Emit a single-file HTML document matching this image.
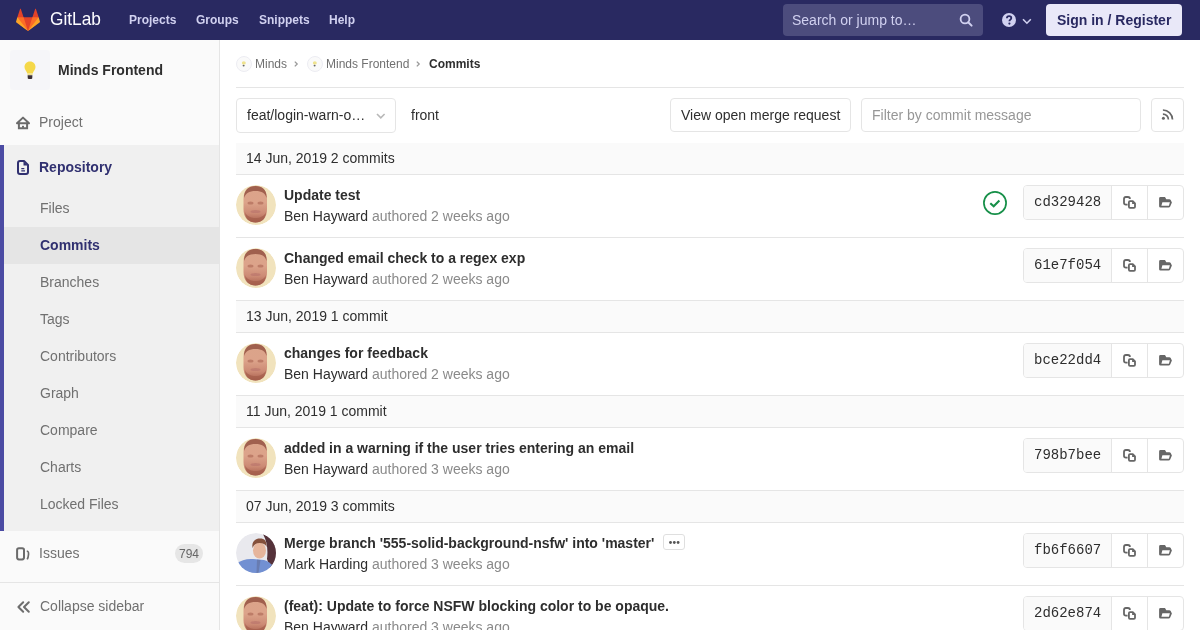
<!DOCTYPE html>
<html><head><meta charset="utf-8">
<style>
*{box-sizing:border-box;margin:0;padding:0}
html,body{width:1200px;height:630px;overflow:hidden;background:#fff}
body{font-family:"Liberation Sans",sans-serif;font-size:14px;color:#2e2e2e}
#wrap{position:absolute;left:0;top:0;width:1200px;height:630px;will-change:transform;overflow:hidden}
.abs{position:absolute}
svg{position:absolute;overflow:visible}
/* header */
#hdr{position:absolute;left:0;top:0;width:1200px;height:40px;background:#292961}
#hdr .nav{position:absolute;top:13px;font-weight:bold;font-size:12px;color:#d1d1f0;line-height:14px}
#search{position:absolute;left:783px;top:4px;width:200px;height:32px;border-radius:4px;background:#4c4c7d}
#search span{position:absolute;left:9px;top:8px;line-height:16px;color:#d1d1f0;font-size:14px}
#signin{position:absolute;left:1046px;top:4px;width:136px;height:32px;border-radius:4px;background:#e9e8f8;color:#292961;font-weight:bold;font-size:14px;line-height:16px;padding:8px 0 0 11px}
/* sidebar */
#side{position:absolute;left:0;top:40px;width:220px;height:590px;background:#fafafa;border-right:1px solid #e5e5e5}
#side .t{position:absolute;line-height:16px;font-size:14px;white-space:nowrap}
#repo{position:absolute;left:0;top:105px;width:219px;height:386px;background:#f0f0f0;border-left:4px solid #4b4ba3}
#side .sub{position:absolute;left:40px;color:#707070}
/* content */
.crumb{position:absolute;top:57px;font-size:12px;line-height:14px;color:#707070;white-space:nowrap}
.box{position:absolute;border:1px solid #e5e5e5;border-radius:4px;background:#fff}
.dh{position:absolute;left:236px;width:948px;background:#fafafa;border-bottom:1px solid #e5e5e5}
.dh span{position:absolute;left:10px;line-height:16px}
.row{position:absolute;left:236px;width:948px;height:63px;border-bottom:1px solid #e5e5e5}
.row .av{position:absolute;left:0;top:10px;width:40px;height:40px}
.row .ti{position:absolute;left:48px;top:12px;font-weight:bold;line-height:16px;white-space:nowrap}
.row .au{position:absolute;left:48px;top:33px;line-height:16px;white-space:nowrap}
.row .au i{font-style:normal;color:#8a8a8a}
.sha{position:absolute;left:787px;top:10px;width:161px;height:35px;border:1px solid #e5e5e5;border-radius:4px;background:#fff}
.sha .h{position:absolute;left:0;top:0;width:88px;height:33px;background:#fafafa;border-right:1px solid #e5e5e5;border-radius:3px 0 0 3px;font-family:"Liberation Mono",monospace;font-size:14px;line-height:16px;padding:8px 0 0 10px;color:#2e2e2e}
.sha .c{position:absolute;left:88px;top:0;width:36px;height:33px;border-right:1px solid #e5e5e5}
.sha .c2{position:absolute;left:124px;top:0;width:36px;height:32px}
</style></head><body><div id="wrap">

<svg width="0" height="0" style="position:absolute">
 <defs>
  <clipPath id="avclip"><circle cx="20" cy="20" r="20"/></clipPath>
  <radialGradient id="bgBen" cx="50%" cy="50%" r="50%"><stop offset="0" stop-color="#f3e6c4"/><stop offset="1" stop-color="#efdcb4"/></radialGradient>
  <linearGradient id="faceBen" x1="0" y1="0" x2="0" y2="1"><stop offset="0" stop-color="#dba48a"/><stop offset="0.45" stop-color="#dca38a"/><stop offset="0.75" stop-color="#cc8a74"/><stop offset="1" stop-color="#a85e4c"/></linearGradient>
  <symbol id="ben" viewBox="0 0 40 40"><g clip-path="url(#avclip)">
   <circle cx="20" cy="20" r="20" fill="#f1e3bd"/>
   <path d="M7.5 14 C7.5 5 12.5 1 19.5 1 C26.5 1 31 5 31 14 L31 24 C31 33 26 37.5 19.5 37.5 C13 37.5 7.5 33 7.5 24 Z" fill="url(#faceBen)"/>
   <path d="M8 13 C8 5 12.5 1 19.5 1 C26.5 1 31 5 30.5 13 C29.5 8.5 26 6 19.5 6 C13 6 9.5 8.5 8 13Z" fill="#a0604e"/>
   <ellipse cx="14.5" cy="18" rx="3" ry="1.6" fill="#b06c5a" opacity=".7"/>
   <ellipse cx="24.5" cy="18" rx="3" ry="1.6" fill="#b06c5a" opacity=".7"/>
   <ellipse cx="19.5" cy="26.5" rx="5" ry="1.6" fill="#b8716a" opacity=".6"/>
   <path d="M9 27 C12 35 27 35 30 27 C29.5 34 25.5 37.5 19.5 37.5 C13.5 37.5 9.5 34 9 27Z" fill="#a35c4a" opacity=".7"/>
  </g></symbol>
  <symbol id="mark" viewBox="0 0 40 40"><g clip-path="url(#avclip)">
   <circle cx="20" cy="20" r="20" fill="#e9e9ee"/>
   <path d="M27 1 C35 4 41 11 41 21 C41 28 38 32 34 35 L31 26 C32 18 31.5 9 27 1Z" fill="#55323a"/>
   <path d="M0 31 C5 27 11 25.5 17 26 L28 27 C32 28 35 30.5 37 33 L40 40 L0 40Z" fill="#7290d2"/>
   <path d="M21 26.5 L24.5 27 L22.5 40 L20.5 40Z" fill="#5a5f80" opacity=".4"/>
   <ellipse cx="23.5" cy="17.5" rx="6.5" ry="8" fill="#e6b59c"/>
   <path d="M16.5 15 C15.5 8 19.5 5.5 24 5.5 C28.5 5.5 31 8 30.5 14 C29.5 11 27 10 23.5 10 C20 10 18 11.5 16.5 15Z" fill="#84503c"/>
  </g></symbol>
 </defs>
</svg>

<div id="hdr">
  <svg style="left:16px;top:8px" width="24" height="24" viewBox="0 0 36 36">
    <path fill="#e24329" d="M2 14l9.38 9v-9l-4-12.28c-.205-.632-1.176-.632-1.38 0z"/>
    <path fill="#e24329" d="M34 14l-9.38 9v-9l4-12.28c.205-.632 1.176-.632 1.38 0z"/>
    <path fill="#e24329" d="M18,34.38 3,14 33,14 Z"/>
    <path fill="#fc6d26" d="M18,34.38 11.38,14 2,14 6,25Z"/>
    <path fill="#fc6d26" d="M18,34.38 24.62,14 34,14 30,25Z"/>
    <path fill="#fca326" d="M2 14L.1 20.16c-.18.565 0 1.2.5 1.56l17.42 12.66z"/>
    <path fill="#fca326" d="M34 14l1.9 6.16c.18.565 0 1.2-.5 1.56L18 34.38z"/>
  </svg>
  <div class="abs" style="left:50px;top:9px;font-size:19px;line-height:20px;color:#fcfcff;transform:scaleX(0.91);transform-origin:0 0">GitLab</div>
  <div class="nav" style="left:129px">Projects</div>
  <div class="nav" style="left:196px">Groups</div>
  <div class="nav" style="left:259px">Snippets</div>
  <div class="nav" style="left:329px">Help</div>
  <div id="search"><span>Search or jump to…</span>
    <svg style="left:176px;top:10px" width="14" height="14" viewBox="0 0 14 14"><circle cx="6" cy="5" r="4.4" fill="none" stroke="#d1d1f0" stroke-width="1.8"/><path d="M9.2 8.2 L12.6 11.6" stroke="#d1d1f0" stroke-width="2" stroke-linecap="round"/></svg>
  </div>
  <svg style="left:1002px;top:13px" width="14" height="14" viewBox="0 0 14 14"><circle cx="7" cy="7" r="7" fill="#d1d1f0"/><path d="M4.9 5.3 C4.9 3.9 5.9 3.1 7.1 3.1 C8.4 3.1 9.3 3.9 9.3 5 C9.3 6.6 7.4 6.6 7.4 8.2" fill="none" stroke="#292961" stroke-width="1.8"/><circle cx="7.4" cy="10.6" r="1.1" fill="#292961"/></svg>
  <svg style="left:1022px;top:18px" width="10" height="7" viewBox="0 0 10 7"><path d="M1 1.2 L4.9 5.2 L8.8 1.2" fill="none" stroke="#d1d1f0" stroke-width="1.6"/></svg>
  <div id="signin">Sign in / Register</div>
</div>

<div id="side">
  <div class="abs" style="left:10px;top:10px;width:40px;height:40px;border-radius:4px;background:#f6f6f9"></div>
  <svg style="left:24px;top:21px" width="12" height="19" viewBox="0 0 12 19">
    <path d="M6 0.5 C9.5 0.5 11.5 3 11.5 6 C11.5 8.5 9.5 10 8.7 12.5 L3.3 12.5 C2.5 10 0.5 8.5 0.5 6 C0.5 3 2.5 0.5 6 0.5Z" fill="#f5d84a"/>
    <path d="M3.3 12.5 L8.7 12.5 L8.5 14 L3.5 14Z" fill="#f0e08a"/>
    <path d="M3.6 14.2 L8.4 14.2 L8.2 17.5 C7.5 18.3 4.5 18.3 3.8 17.5Z" fill="#3b3034"/>
  </svg>
  <div class="t" style="left:58px;top:22px;font-weight:bold;color:#2e2e2e">Minds Frontend</div>
  <svg style="left:16px;top:76px" width="14" height="14" viewBox="0 0 14 14"><path d="M1 7.3 L7 1.6 L13 7.3 Z" fill="none" stroke="#6b6b6b" stroke-width="2" stroke-linejoin="round"/><path d="M2.9 7.3 V12.2 H11.1 V7.3" fill="none" stroke="#6b6b6b" stroke-width="2"/><rect x="6" y="9.8" width="2" height="2" fill="#6b6b6b"/></svg>
  <div class="t" style="left:39px;top:74px;color:#707070">Project</div>
  <div id="repo"></div>
  <svg style="left:17px;top:120px" width="12" height="15" viewBox="0 0 12 15"><path d="M1 3 Q1 1 3 1 H7 L11 5 V12 Q11 14 9 14 H3 Q1 14 1 12 Z" fill="none" stroke="#303070" stroke-width="2" stroke-linejoin="round"/><path d="M6.5 1.5 V5.5 H10.5Z" fill="#303070"/><path d="M4.3 8.6 H7.3 M4.3 10.8 H8" stroke="#303070" stroke-width="1.3"/></svg>
  <div class="t" style="left:39px;top:119px;font-weight:bold;color:#303070">Repository</div>
  <div class="t sub" style="top:160px">Files</div>
  <div class="abs" style="left:4px;top:187px;width:215px;height:37px;background:#e5e5e5"></div>
  <div class="t sub" style="top:197px;font-weight:bold;color:#303070">Commits</div>
  <div class="t sub" style="top:234px">Branches</div>
  <div class="t sub" style="top:271px">Tags</div>
  <div class="t sub" style="top:308px">Contributors</div>
  <div class="t sub" style="top:345px">Graph</div>
  <div class="t sub" style="top:382px">Compare</div>
  <div class="t sub" style="top:419px">Charts</div>
  <div class="t sub" style="top:456px">Locked Files</div>
  <svg style="left:16px;top:506px" width="14" height="16" viewBox="0 0 14 16"><rect x="1.1" y="2.2" width="6.9" height="11.2" rx="1.8" fill="none" stroke="#6b6b6b" stroke-width="2"/><path d="M10.8 5.2 C12.6 5.4 12.7 6 12.5 8.5 C12.3 10.8 12 12.2 11.2 13.4" fill="none" stroke="#6b6b6b" stroke-width="1.7"/></svg>
  <div class="t" style="left:39px;top:505px;color:#707070">Issues</div>
  <div class="abs" style="left:175px;top:504px;width:28px;height:19px;border-radius:9.5px;background:#e6e6e6;font-size:12px;line-height:20px;text-align:center;color:#666">794</div>
  <div class="abs" style="left:0;top:542px;width:219px;height:1px;background:#e5e5e5"></div>
  <svg style="left:16px;top:560px" width="15" height="15" viewBox="0 0 15 15"><path d="M7.2 2.2 L2.4 7 L7.2 11.8 M12.8 2.2 L8 7 L12.8 11.8" fill="none" stroke="#6e6e6e" stroke-width="2" stroke-linecap="round" stroke-linejoin="round"/></svg>
  <div class="t" style="left:40px;top:558px;color:#707070">Collapse sidebar</div>
</div>

<!-- breadcrumb -->
<svg style="left:236px;top:56px" width="16" height="16" viewBox="0 0 16 16"><circle cx="8" cy="8" r="7.5" fill="#fafafa" stroke="#ececf2" stroke-width="1"/><ellipse cx="7.8" cy="6.9" rx="2" ry="1.7" fill="#efe38e"/><ellipse cx="7.6" cy="9.6" rx="1" ry="0.9" fill="#666"/></svg>
<div class="crumb" style="left:255px">Minds</div>
<svg style="left:293px;top:59px" width="6" height="9" viewBox="0 0 6 9"><path d="M1.8 2.6 L4.2 5 L1.8 7.4" fill="none" stroke="#9a9a9a" stroke-width="1.3"/></svg>
<svg style="left:307px;top:56px" width="16" height="16" viewBox="0 0 16 16"><circle cx="8" cy="8" r="7.5" fill="#fafafa" stroke="#ececf2" stroke-width="1"/><ellipse cx="7.8" cy="6.9" rx="2" ry="1.7" fill="#efe38e"/><ellipse cx="7.6" cy="9.6" rx="1" ry="0.9" fill="#666"/></svg>
<div class="crumb" style="left:326px">Minds Frontend</div>
<svg style="left:415px;top:59px" width="6" height="9" viewBox="0 0 6 9"><path d="M1.8 2.6 L4.2 5 L1.8 7.4" fill="none" stroke="#9a9a9a" stroke-width="1.3"/></svg>
<div class="crumb" style="left:429px;font-weight:bold;color:#2e2e2e">Commits</div>
<div class="abs" style="left:236px;top:87px;width:948px;height:1px;background:#e5e5e5"></div>

<!-- toolbar -->
<div class="box" style="left:236px;top:98px;width:160px;height:35px"><span class="abs" style="left:10px;top:8px;line-height:16px;white-space:nowrap">feat/login-warn-o…</span>
  <svg style="left:139px;top:14px" width="10" height="6" viewBox="0 0 10 6"><path d="M1 1 L4.8 4.8 L8.6 1" fill="none" stroke="#b8b8b8" stroke-width="1.6"/></svg></div>
<div class="abs" style="left:411px;top:107px;line-height:16px">front</div>
<div class="box" style="left:670px;top:98px;width:181px;height:34px"><span class="abs" style="left:10px;top:8px;line-height:16px;white-space:nowrap">View open merge request</span></div>
<div class="box" style="left:861px;top:98px;width:280px;height:34px"><span class="abs" style="left:10px;top:8px;line-height:16px;color:#979797;white-space:nowrap">Filter by commit message</span></div>
<div class="box" style="left:1151px;top:98px;width:33px;height:34px">
  <svg style="left:10px;top:10px" width="12" height="12" viewBox="0 0 12 12"><circle cx="1.4" cy="9.3" r="1.5" fill="#666"/><path d="M0.9 5.1 A5.5 5.5 0 0 1 6.4 10.6" fill="none" stroke="#666" stroke-width="1.7"/><path d="M0.9 1 A9.6 9.6 0 0 1 10.5 10.6" fill="none" stroke="#666" stroke-width="1.7"/></svg>
</div>

<!-- list -->
<div class="dh" style="top:143px;height:32px"><span style="top:7px">14 Jun, 2019 2 commits</span></div>
<div class="row" style="top:175px"><svg class="av" viewBox="0 0 40 40"><use href="#ben"/></svg><div class="ti">Update test</div><div class="au">Ben Hayward <i>authored 2 weeks ago</i></div>
  <svg style="left:747px;top:16px" width="24" height="24" viewBox="0 0 24 24"><circle cx="12" cy="12" r="11.1" fill="#fff" stroke="#168f48" stroke-width="1.7"/><path d="M7.3 12.2 L10.7 15.3 L16.4 9.6" fill="none" stroke="#168f48" stroke-width="2.1"/></svg>
  <div class="sha"><div class="h">cd329428</div><div class="c"><svg style="left:11px;top:10px" width="14" height="14" viewBox="0 0 14 14"><path d="M4.6 8.7 H2.9 Q1 8.7 1 6.8 V2.9 Q1 1 2.9 1 H4.9 Q6.9 1 6.9 2.9" fill="none" stroke="#666" stroke-width="1.8"/><path d="M7 5.2 Q5.9 5.2 5.9 6.3 V10.7 Q5.9 11.8 7 11.8 H10.9 Q12 11.8 12 10.7 V7.4 L9.8 5.2 Z" fill="none" stroke="#666" stroke-width="1.8" stroke-linejoin="round"/><path d="M9.1 5.3 V8.1 H12 Z" fill="#666"/></svg></div><div class="c2"><svg style="left:11px;top:11px" width="13" height="11" viewBox="0 0 13 11"><path fill-rule="evenodd" fill="#666" d="M0.1 1.5 Q0.1 0.1 1.5 0.1 H6 L7.3 2.3 H10.3 Q11.3 2.3 11.7 3.1 L12.9 5.4 L11.2 9.5 Q10.7 10.6 9.6 10.6 H1.5 Q0.1 10.6 0.1 9.2 Z M3.4 5.3 H10.9 L9.9 8.7 H2.4 Z"/></svg></div></div></div>
<div class="row" style="top:238px"><svg class="av" viewBox="0 0 40 40"><use href="#ben"/></svg><div class="ti">Changed email check to a regex exp</div><div class="au">Ben Hayward <i>authored 2 weeks ago</i></div>
  <div class="sha"><div class="h">61e7f054</div><div class="c"><svg style="left:11px;top:10px" width="14" height="14" viewBox="0 0 14 14"><path d="M4.6 8.7 H2.9 Q1 8.7 1 6.8 V2.9 Q1 1 2.9 1 H4.9 Q6.9 1 6.9 2.9" fill="none" stroke="#666" stroke-width="1.8"/><path d="M7 5.2 Q5.9 5.2 5.9 6.3 V10.7 Q5.9 11.8 7 11.8 H10.9 Q12 11.8 12 10.7 V7.4 L9.8 5.2 Z" fill="none" stroke="#666" stroke-width="1.8" stroke-linejoin="round"/><path d="M9.1 5.3 V8.1 H12 Z" fill="#666"/></svg></div><div class="c2"><svg style="left:11px;top:11px" width="13" height="11" viewBox="0 0 13 11"><path fill-rule="evenodd" fill="#666" d="M0.1 1.5 Q0.1 0.1 1.5 0.1 H6 L7.3 2.3 H10.3 Q11.3 2.3 11.7 3.1 L12.9 5.4 L11.2 9.5 Q10.7 10.6 9.6 10.6 H1.5 Q0.1 10.6 0.1 9.2 Z M3.4 5.3 H10.9 L9.9 8.7 H2.4 Z"/></svg></div></div></div>
<div class="dh" style="top:301px;height:32px"><span style="top:7px">13 Jun, 2019 1 commit</span></div>
<div class="row" style="top:333px"><svg class="av" viewBox="0 0 40 40"><use href="#ben"/></svg><div class="ti">changes for feedback</div><div class="au">Ben Hayward <i>authored 2 weeks ago</i></div>
  <div class="sha"><div class="h">bce22dd4</div><div class="c"><svg style="left:11px;top:10px" width="14" height="14" viewBox="0 0 14 14"><path d="M4.6 8.7 H2.9 Q1 8.7 1 6.8 V2.9 Q1 1 2.9 1 H4.9 Q6.9 1 6.9 2.9" fill="none" stroke="#666" stroke-width="1.8"/><path d="M7 5.2 Q5.9 5.2 5.9 6.3 V10.7 Q5.9 11.8 7 11.8 H10.9 Q12 11.8 12 10.7 V7.4 L9.8 5.2 Z" fill="none" stroke="#666" stroke-width="1.8" stroke-linejoin="round"/><path d="M9.1 5.3 V8.1 H12 Z" fill="#666"/></svg></div><div class="c2"><svg style="left:11px;top:11px" width="13" height="11" viewBox="0 0 13 11"><path fill-rule="evenodd" fill="#666" d="M0.1 1.5 Q0.1 0.1 1.5 0.1 H6 L7.3 2.3 H10.3 Q11.3 2.3 11.7 3.1 L12.9 5.4 L11.2 9.5 Q10.7 10.6 9.6 10.6 H1.5 Q0.1 10.6 0.1 9.2 Z M3.4 5.3 H10.9 L9.9 8.7 H2.4 Z"/></svg></div></div></div>
<div class="dh" style="top:396px;height:32px"><span style="top:7px">11 Jun, 2019 1 commit</span></div>
<div class="row" style="top:428px"><svg class="av" viewBox="0 0 40 40"><use href="#ben"/></svg><div class="ti">added in a warning if the user tries entering an email</div><div class="au">Ben Hayward <i>authored 3 weeks ago</i></div>
  <div class="sha"><div class="h">798b7bee</div><div class="c"><svg style="left:11px;top:10px" width="14" height="14" viewBox="0 0 14 14"><path d="M4.6 8.7 H2.9 Q1 8.7 1 6.8 V2.9 Q1 1 2.9 1 H4.9 Q6.9 1 6.9 2.9" fill="none" stroke="#666" stroke-width="1.8"/><path d="M7 5.2 Q5.9 5.2 5.9 6.3 V10.7 Q5.9 11.8 7 11.8 H10.9 Q12 11.8 12 10.7 V7.4 L9.8 5.2 Z" fill="none" stroke="#666" stroke-width="1.8" stroke-linejoin="round"/><path d="M9.1 5.3 V8.1 H12 Z" fill="#666"/></svg></div><div class="c2"><svg style="left:11px;top:11px" width="13" height="11" viewBox="0 0 13 11"><path fill-rule="evenodd" fill="#666" d="M0.1 1.5 Q0.1 0.1 1.5 0.1 H6 L7.3 2.3 H10.3 Q11.3 2.3 11.7 3.1 L12.9 5.4 L11.2 9.5 Q10.7 10.6 9.6 10.6 H1.5 Q0.1 10.6 0.1 9.2 Z M3.4 5.3 H10.9 L9.9 8.7 H2.4 Z"/></svg></div></div></div>
<div class="dh" style="top:491px;height:32px"><span style="top:7px">07 Jun, 2019 3 commits</span></div>
<div class="row" style="top:523px"><svg class="av" viewBox="0 0 40 40"><use href="#mark"/></svg><div class="ti">Merge branch '555-solid-background-nsfw' into 'master'</div><div class="au">Mark Harding <i>authored 3 weeks ago</i></div>
  <div class="abs" style="left:427px;top:11px;width:22px;height:16px;border:1px solid #dfdfdf;border-radius:3px;background:#fff"><svg style="left:5px;top:6px" width="11" height="3" viewBox="0 0 11 3"><circle cx="1.5" cy="1.5" r="1.4" fill="#555"/><circle cx="5.3" cy="1.5" r="1.4" fill="#555"/><circle cx="9.1" cy="1.5" r="1.4" fill="#555"/></svg></div>
  <div class="sha"><div class="h">fb6f6607</div><div class="c"><svg style="left:11px;top:10px" width="14" height="14" viewBox="0 0 14 14"><path d="M4.6 8.7 H2.9 Q1 8.7 1 6.8 V2.9 Q1 1 2.9 1 H4.9 Q6.9 1 6.9 2.9" fill="none" stroke="#666" stroke-width="1.8"/><path d="M7 5.2 Q5.9 5.2 5.9 6.3 V10.7 Q5.9 11.8 7 11.8 H10.9 Q12 11.8 12 10.7 V7.4 L9.8 5.2 Z" fill="none" stroke="#666" stroke-width="1.8" stroke-linejoin="round"/><path d="M9.1 5.3 V8.1 H12 Z" fill="#666"/></svg></div><div class="c2"><svg style="left:11px;top:11px" width="13" height="11" viewBox="0 0 13 11"><path fill-rule="evenodd" fill="#666" d="M0.1 1.5 Q0.1 0.1 1.5 0.1 H6 L7.3 2.3 H10.3 Q11.3 2.3 11.7 3.1 L12.9 5.4 L11.2 9.5 Q10.7 10.6 9.6 10.6 H1.5 Q0.1 10.6 0.1 9.2 Z M3.4 5.3 H10.9 L9.9 8.7 H2.4 Z"/></svg></div></div></div>
<div class="row" style="top:586px"><svg class="av" viewBox="0 0 40 40"><use href="#ben"/></svg><div class="ti">(feat): Update to force NSFW blocking color to be opaque.</div><div class="au">Ben Hayward <i>authored 3 weeks ago</i></div>
  <div class="sha"><div class="h">2d62e874</div><div class="c"><svg style="left:11px;top:10px" width="14" height="14" viewBox="0 0 14 14"><path d="M4.6 8.7 H2.9 Q1 8.7 1 6.8 V2.9 Q1 1 2.9 1 H4.9 Q6.9 1 6.9 2.9" fill="none" stroke="#666" stroke-width="1.8"/><path d="M7 5.2 Q5.9 5.2 5.9 6.3 V10.7 Q5.9 11.8 7 11.8 H10.9 Q12 11.8 12 10.7 V7.4 L9.8 5.2 Z" fill="none" stroke="#666" stroke-width="1.8" stroke-linejoin="round"/><path d="M9.1 5.3 V8.1 H12 Z" fill="#666"/></svg></div><div class="c2"><svg style="left:11px;top:11px" width="13" height="11" viewBox="0 0 13 11"><path fill-rule="evenodd" fill="#666" d="M0.1 1.5 Q0.1 0.1 1.5 0.1 H6 L7.3 2.3 H10.3 Q11.3 2.3 11.7 3.1 L12.9 5.4 L11.2 9.5 Q10.7 10.6 9.6 10.6 H1.5 Q0.1 10.6 0.1 9.2 Z M3.4 5.3 H10.9 L9.9 8.7 H2.4 Z"/></svg></div></div></div>

</div></body></html>
